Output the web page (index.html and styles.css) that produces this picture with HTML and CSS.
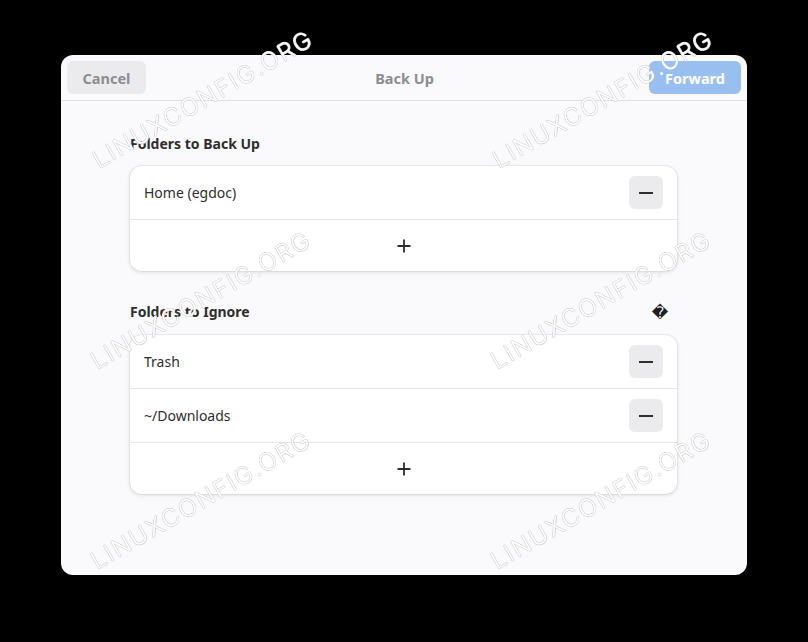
FILE: index.html
```html
<!DOCTYPE html>
<html lang="en">
<head>
    <meta charset="UTF-8">
    <meta name="viewport" content="width=device-width, initial-scale=1.0">
    <title>Back Up</title>
    <link rel="stylesheet" href="styles.css">
</head>
<body>
    <div id="dialog">
        <div class="headerbar">
            <button class="hbtn cancel">Cancel</button>
            <div class="title">Back Up</div>
            <button class="hbtn forward">Forward</button>
        </div>
        <div class="content">
            <div class="group_head">
                <h3>Folders to Back Up</h3>
            </div>
            <div class="boxed_list">
                <div class="row">
                    <span class="label">Home (egdoc)</span>
                    <button class="minus"><span class="dash"></span></button>
                </div>
                <div class="row add_row">
                    <svg width="16" height="16" viewBox="0 0 16 16"><path d="M8 1.5v13M1.5 8h13" stroke="#2e2e2e" stroke-width="1.8" fill="none"/></svg>
                </div>
            </div>

            <div class="group_head second">
                <h3>Folders to Ignore</h3>
                <button class="flat_btn">&#xFFFD;</button>
            </div>
            <div class="boxed_list">
                <div class="row">
                    <span class="label">Trash</span>
                    <button class="minus"><span class="dash"></span></button>
                </div>
                <div class="row">
                    <span class="label">~/Downloads</span>
                    <button class="minus"><span class="dash"></span></button>
                </div>
                <div class="row add_row">
                    <svg width="16" height="16" viewBox="0 0 16 16"><path d="M8 1.5v13M1.5 8h13" stroke="#2e2e2e" stroke-width="1.8" fill="none"/></svg>
                </div>
            </div>
        </div>
    </div>

    <!-- watermark overlay -->
    <div class="marks">
        <span class="mark" style="left:203px;top:99px">LINUXCONFIG.ORG</span>
        <span class="mark" style="left:603px;top:99px">LINUXCONFIG.ORG</span>
        <span class="mark" style="left:201px;top:300px">LINUXCONFIG.ORG</span>
        <span class="mark" style="left:601px;top:300px">LINUXCONFIG.ORG</span>
        <span class="mark" style="left:201px;top:500px">LINUXCONFIG.ORG</span>
        <span class="mark" style="left:601px;top:500px">LINUXCONFIG.ORG</span>
    </div>
</body>
</html>
```

FILE: styles.css
```css
html, body{
    margin: 0;
    height: 100%;
    background: #000;
    overflow: hidden;
}
body{
    padding-top: 55px;
    box-sizing: border-box;
    font-family: "Noto Sans", "Open Sans", sans-serif;
    color: #2e2e2e;
}
#dialog{
    width: 686px;
    height: 520px;
    margin: 0 auto;
    background: #faf9fb;
    border-radius: 12px;
    overflow: hidden;
}
.headerbar{
    display: flex;
    align-items: center;
    justify-content: space-between;
    height: 45px;
    padding: 0 6px;
    border-bottom: 1px solid #e0dfe2;
}
.hbtn{
    height: 33px;
    border: none;
    border-radius: 6px;
    font-family: inherit;
    font-size: 14.5px;
    font-weight: bold;
    padding: 0;
}
.cancel{
    width: 79px;
    background: #ebebed;
    color: #8d8d90;
}
.forward{
    width: 92px;
    background: #98bfef;
    color: #fff;
}
.title{
    font-size: 14.5px;
    font-weight: bold;
    color: #8d8d90;
    padding-left: 14px;
}
.content{
    width: 547px;
    margin: 0 70px 0 69px;
    padding-top: 32px;
}
.group_head{
    display: flex;
    align-items: center;
    justify-content: space-between;
    height: 20px;
    margin-bottom: 13px;
}
.group_head.second{
    margin-top: 30px;
    margin-bottom: 14px;
}
h3{
    margin: 0;
    font-size: 14px;
    font-weight: bold;
    color: #2e2e2e;
}
.flat_btn{
    width: 34px;
    height: 20px;
    padding: 0;
    margin-top: 2px;
    border: none;
    background: none;
    font-family: "DejaVu Sans", sans-serif;
    font-size: 16px;
    color: #1e1e1e;
}
.boxed_list{
    background: #fff;
    border-radius: 12px;
    box-shadow: 0 0 0 1px rgba(0, 0, 0, 0.04), 0 1px 3px 1px rgba(0, 0, 0, 0.07), 0 2px 6px 2px rgba(0, 0, 0, 0.02);
}
.row{
    display: flex;
    align-items: center;
    justify-content: space-between;
    height: 53px;
    padding: 0 14px;
    border-bottom: 1px solid #e4e4e6;
}
.row.add_row{
    justify-content: center;
    height: 51px;
    border-bottom: none;
}
.label{
    font-size: 14px;
    color: #2e2e2e;
}
.minus{
    width: 34px;
    height: 33px;
    padding: 0;
    border: none;
    border-radius: 6px;
    background: #ebebed;
    display: flex;
    align-items: center;
    justify-content: center;
}
.dash{
    display: block;
    width: 14px;
    height: 2px;
    background: #2e2e2e;
}
.marks{
    position: fixed;
    inset: 0;
    pointer-events: none;
}
.mark{
    position: absolute;
    transform: translate(-50%, -50%) rotate(-30deg);
    white-space: nowrap;
    font-family: "Inter", "DejaVu Sans", sans-serif;
    font-weight: 300;
    font-size: 24px;
    letter-spacing: 2px;
    color: #fff;
    text-shadow: 0.6px 0 #cfcfcf, -0.6px 0 #cfcfcf, 0 0.6px #cfcfcf, 0 -0.6px #cfcfcf;
}
```
